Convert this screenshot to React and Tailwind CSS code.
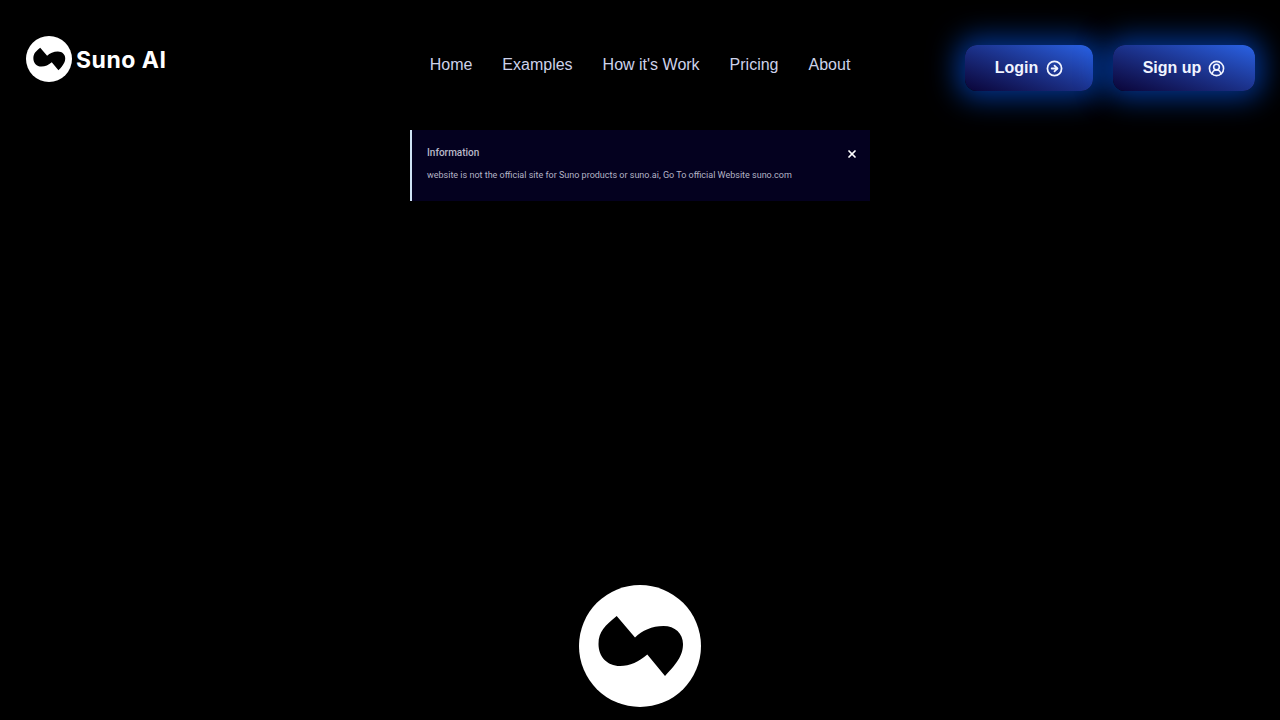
import { CircleArrowRight, CircleUserRound, X } from 'lucide-react';

function SunoMark({ className }) {
  return (
    <svg viewBox="0 0 122 122" className={className}>
      <circle cx="61" cy="61" r="61" fill="#fff" />
      <path
        d="M37.7 31 L56 52.5 C63 45.5 73 41 84.5 41 C96 41 104 48.5 104 59 C104 68.5 100 76.5 86 91 L68.3 69.5 C60 76.5 51 81 41 81 C28 81 19.5 71.5 19.5 59 C19.5 46.5 26 40.5 37.7 31 Z"
        fill="#000"
      />
    </svg>
  );
}

export default function App() {
  const links = ['Home', 'Examples', "How it's Work", 'Pricing', 'About'];

  return (
    <main className="h-[720px] overflow-hidden bg-black font-['Liberation_Sans',sans-serif]">
      <header className="grid h-[130px] grid-cols-[1fr_auto_1fr] pl-[25px] pr-[25px]">
        <div className="ml-[1px] flex items-start gap-[4px] pt-[36px]">
          <SunoMark className="h-[46px] w-[46px]" />
          <span className="mt-[10px] font-['Inter',sans-serif] text-[23px] leading-[28px] font-bold tracking-[0.5px] text-white">
            Suno AI
          </span>
        </div>

        <nav className="flex items-start gap-[30px] pt-[55px] text-[16px] leading-[19px] text-[#cdd2ea]">
          {links.map((link) => (
            <a key={link}>{link}</a>
          ))}
        </nav>

        <div className="flex items-start justify-end gap-[20px] pt-[45px]">
          <button className="flex h-[46px] w-[128px] items-center justify-center gap-[8px] rounded-[12px] bg-gradient-to-tr from-[#0a0538] to-[#2a63e6] text-[16px] font-bold text-[#f1f4ff] shadow-[0_0_28px_8px_rgba(5,85,235,0.6)]">
            Login
            <CircleArrowRight size={17} strokeWidth={2.5} />
          </button>
          <button className="flex h-[46px] w-[142px] items-center justify-center gap-[7px] rounded-[12px] bg-gradient-to-tr from-[#0a0538] to-[#2a63e6] text-[16px] font-bold text-[#f1f4ff] shadow-[0_0_28px_8px_rgba(5,85,235,0.6)]">
            Sign up
            <CircleUserRound size={17} strokeWidth={2.25} />
          </button>
        </div>
      </header>

      <div className="relative mx-auto h-[71px] w-[460px] border-l-2 border-[#cfe3f5] bg-[#04011f] pl-[15px] pt-[16px] font-['Roboto',sans-serif]">
        <p className="text-[10px] leading-[14px] font-medium text-[#b9b9c9]">Information</p>
        <p className="mt-[8px] text-[9px] leading-[14px] text-[#b4b4c6]">
          website is not the official site for Suno products or suno.ai, Go To official Website suno.com
        </p>
        <X size={12} strokeWidth={3.5} className="absolute right-[12px] top-[18px] text-white" />
      </div>

      <div className="mt-[384px] flex justify-center">
        <SunoMark className="h-[122px] w-[122px]" />
      </div>
    </main>
  );
}
